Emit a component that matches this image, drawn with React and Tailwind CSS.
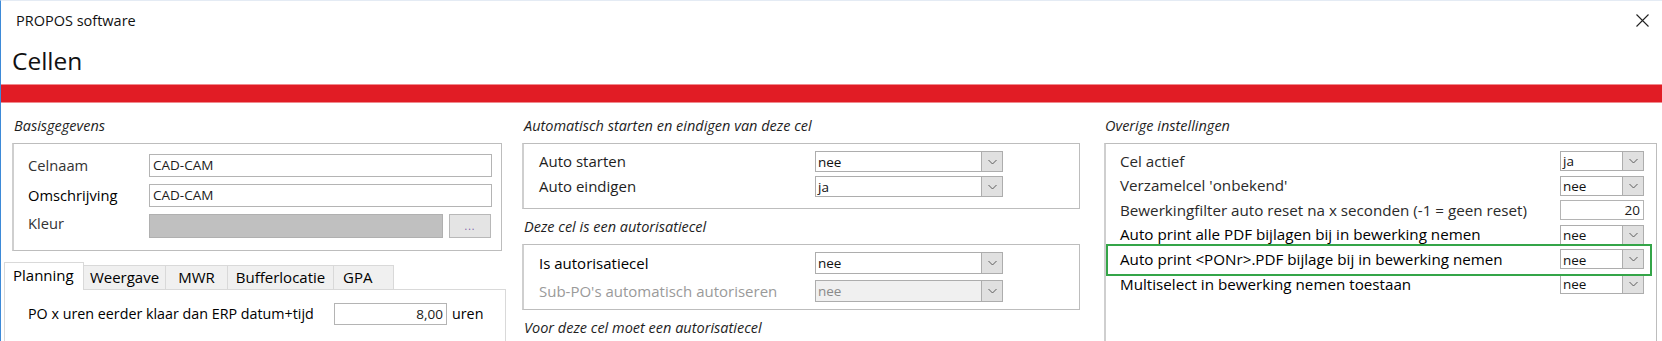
import React from "react";

function Chevron() {
  return (
    <svg width="9" height="6" viewBox="0 0 9 6" fill="none">
      <path d="M0.5 1 L4.5 5 L8.5 1" stroke="#5c5c5c" strokeWidth="1" />
    </svg>
  );
}

function Select({ value, disabled, height = "h-[21px]" }) {
  return (
    <div
      className={`flex w-full ${height} border border-[#adadad] text-[13.5px] ${
        disabled ? "bg-[#f0f0f0] text-[#8a8a8a]" : "bg-white text-[#111]"
      }`}
    >
      <span className="flex flex-1 items-center pl-[2px] pt-[1px]">{value}</span>
      <span className="flex w-[21px] items-center justify-center border-l border-[#adadad] bg-[#e0e0e0]">
        <Chevron />
      </span>
    </div>
  );
}

function TextBox({ value, right, className = "" }) {
  return (
    <div
      className={`flex items-center border border-[#b4b4b4] bg-white px-[3px] text-[13.5px] ${
        right ? "justify-end" : ""
      } ${className}`}
    >
      {value}
    </div>
  );
}

function Heading({ children, mt = "mt-[13px]" }) {
  return (
    <div className={`${mt} mb-[7px] h-[20px] flex items-center italic text-[14.5px] text-[#1e1e1e]`}>
      {children}
    </div>
  );
}

function SettingRow({ label, dark, children }) {
  return (
    <div className="flex h-[20px] items-center">
      <span className={`flex-1 text-[15.2px] ${dark ? "text-black" : "text-[#2a2a2a]"}`}>{label}</span>
      <div className="w-[84px] h-full">{children}</div>
    </div>
  );
}

export default function App() {
  const tabs = [
    { name: "Weergave", cls: "w-[82px] justify-center" },
    { name: "MWR", cls: "w-[62px] justify-center" },
    { name: "Bufferlocatie", cls: "w-[106px] justify-center" },
    { name: "GPA", cls: "w-[60px] pl-[9px]" },
  ];

  return (
    <div className="h-[341px] w-full overflow-hidden bg-white border-l border-t border-l-[#3d8ad8] border-t-[#e4ebf4] font-['Open_Sans',sans-serif] text-[15px] text-[#1a1a1a]">
      {/* title bar */}
      <div className="flex h-[39px] items-center justify-between pl-[15px] pr-[12px]">
        <span className="text-[14.5px] text-[#111]">PROPOS software</span>
        <svg width="13" height="13" viewBox="0 0 13 13" className="mr-[1px]">
          <path d="M0.5 0.5 L12.5 12.5 M12.5 0.5 L0.5 12.5" stroke="#222" strokeWidth="1.1" />
        </svg>
      </div>
      <div className="flex h-[44px] items-center pl-[11px] pb-[2px]">
        <h1 className="text-[24.5px] text-[#111]">Cellen</h1>
      </div>
      <div className="h-[19px] w-full bg-[#e11c25] border-y border-[#f08a8e]" />

      <div className="flex pl-[3px]">
        {/* left column */}
        <div className="w-[502px] flex flex-col">
          <div className="pl-[10px]">
            <Heading>Basisgegevens</Heading>
          </div>
          <div className="ml-[8px] w-[490px] border border-[#bdbdbd] border-l-2 border-l-[#cfcfcf] pt-[10px] pb-[12px] pl-[14px] pr-[9px] flex flex-col gap-[7px] text-[14.7px]">
            <div className="flex h-[23px] items-center">
              <span className="w-[121px] text-[#333]">Celnaam</span>
              <TextBox value="CAD-CAM" className="flex-1 h-full" />
            </div>
            <div className="flex h-[23px] items-center">
              <span className="w-[121px] text-black">Omschrijving</span>
              <TextBox value="CAD-CAM" className="flex-1 h-full" />
            </div>
            <div className="flex h-[24px] items-center">
              <span className="w-[121px] text-[#333] self-start -mt-[2px]">Kleur</span>
              <div className="w-[294px] h-full bg-[#c0c0c0] border border-[#b0b0b0]" />
              <div className="ml-[6px] w-[42px] h-full bg-[#e4e4e4] border border-[#b8b8b8] flex items-center justify-center text-[10px] text-[#7a5aa8] tracking-[1px]">
                ...
              </div>
            </div>
          </div>

          {/* tabs */}
          <div className="mt-[11px] flex items-end h-[28px]">
            <div className="w-[80px] h-[28px] bg-white border border-b-0 border-[#d9d9d9] pl-[8px] pt-[1px] text-black relative z-10">
              Planning
            </div>
            {tabs.map((t) => (
              <div
                key={t.name}
                className={`${t.cls} h-[25px] bg-[#f0f0f0] border border-l-0 border-[#d9d9d9] flex items-center text-black`}
              >
                {t.name}
              </div>
            ))}
          </div>
          <div className="-mt-px w-[502px] h-[60px] border border-[#d9d9d9] border-b-0 pl-[23px] pt-[13px] flex flex-col gap-[16px]">
            <div className="flex h-[23px] items-center">
              <span className="w-[306px] text-black text-[14.3px]">PO x uren eerder klaar dan ERP datum+tijd</span>
              <TextBox value="8,00" right className="w-[113px] h-full" />
              <span className="ml-[5px] text-black text-[14.3px]">uren</span>
            </div>
            <div className="flex h-[23px] items-center">
              <span className="w-[306px]" />
              <TextBox value="" className="w-[113px] h-full" />
            </div>
          </div>
        </div>

        {/* middle column */}
        <div className="ml-[16px] w-[558px] flex flex-col">
          <div className="pl-[2px]">
            <Heading>Automatisch starten en eindigen van deze cel</Heading>
          </div>
          <div className="border border-[#bdbdbd] border-l-2 border-l-[#cfcfcf] pt-[7px] pb-[11px] pl-[15px] flex flex-col gap-[4px]">
            <div className="flex items-center h-[21px]">
              <span className="w-[276px] text-[#1e1e1e]">Auto starten</span>
              <div className="w-[188px]"><Select value="nee" /></div>
            </div>
            <div className="flex items-center h-[21px]">
              <span className="w-[276px] text-[#1e1e1e]">Auto eindigen</span>
              <div className="w-[188px]"><Select value="ja" /></div>
            </div>
          </div>
          <div className="pl-[2px]">
            <Heading mt="mt-[8px]">Deze cel is een autorisatiecel</Heading>
          </div>
          <div className="border border-[#bdbdbd] border-l-2 border-l-[#cfcfcf] pt-[7px] pb-[7px] pl-[15px] flex flex-col gap-[6px]">
            <div className="flex items-center h-[22px]">
              <span className="w-[276px] text-black">Is autorisatiecel</span>
              <div className="w-[188px]"><Select value="nee" height="h-[22px]" /></div>
            </div>
            <div className="flex items-center h-[22px]">
              <span className="w-[276px] text-[#9a9a9a]">Sub-PO's automatisch autoriseren</span>
              <div className="w-[188px]"><Select value="nee" disabled height="h-[22px]" /></div>
            </div>
          </div>
          <div className="pl-[2px]">
            <Heading mt="mt-[8px]">Voor deze cel moet een autorisatiecel</Heading>
          </div>
        </div>

        {/* right column */}
        <div className="ml-[24px] w-[553px] flex flex-col">
          <div className="pl-[1px]">
            <Heading>Overige instellingen</Heading>
          </div>
          <div className="relative h-[200px] border border-[#bdbdbd] border-b-0 border-l-2 border-l-[#cfcfcf] pt-[7px] pl-[14px] pr-[12px] flex flex-col gap-[4.6px]">
            <SettingRow label="Cel actief">
              <Select value="ja" height="h-[20px]" />
            </SettingRow>
            <SettingRow label="Verzamelcel 'onbekend'">
              <Select value="nee" height="h-[20px]" />
            </SettingRow>
            <SettingRow label="Bewerkingfilter auto reset na x seconden (-1 = geen reset)">
              <TextBox value="20" right className="h-[20px] w-full" />
            </SettingRow>
            <SettingRow label="Auto print alle PDF bijlagen bij in bewerking nemen" dark>
              <Select value="nee" height="h-[20px]" />
            </SettingRow>
            <SettingRow label="Auto print <PONr>.PDF bijlage bij in bewerking nemen" dark>
              <Select value="nee" height="h-[20px]" />
            </SettingRow>
            <SettingRow label="Multiselect in bewerking nemen toestaan" dark>
              <Select value="nee" height="h-[20px]" />
            </SettingRow>
            {/* highlight marker */}
            <div className="absolute left-0 top-[100px] w-[546px] h-[32px] border-2 border-[#34a548] pointer-events-none" />
          </div>
        </div>
      </div>
    </div>
  );
}
